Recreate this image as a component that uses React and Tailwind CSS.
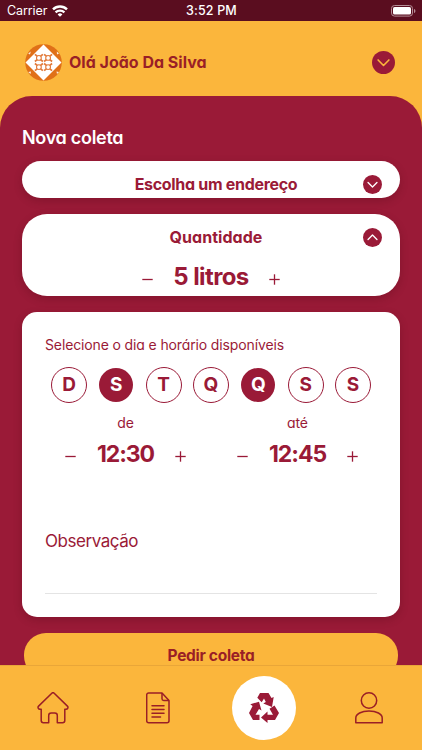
import React from 'react';
import clsx from 'clsx';

const days = [
  { label: 'D', selected: false },
  { label: 'S', selected: true },
  { label: 'T', selected: false },
  { label: 'Q', selected: false },
  { label: 'Q', selected: true },
  { label: 'S', selected: false },
  { label: 'S', selected: false },
];

function StatusBar() {
  return (
    <div className="h-[21px] shrink-0 bg-[#5a0d1f] text-white grid grid-cols-3 items-center pl-[7px] pr-[6px] pt-px [font-feature-settings:normal]">
      <div className="flex items-center gap-[5px] text-[12.5px] leading-none">
        <span className="tracking-[-0.1px]">Carrier</span>
        <svg width="16" height="12" viewBox="0 0 16 12" fill="none" stroke="white" strokeWidth="2.4">
          <path d="M1 4.4a10 10 0 0 1 14 0" />
          <path d="M3.6 7.4a6.3 6.3 0 0 1 8.8 0" />
          <path d="M8 11.8 5.6 9.4a3.4 3.4 0 0 1 4.8 0z" fill="white" stroke="none" />
        </svg>
      </div>
      <span className="text-center text-[12.5px] leading-none font-medium tracking-[0.15px]">3:52 PM</span>
      <svg className="justify-self-end" width="25" height="12" viewBox="0 0 25 12">
        <rect x="0.5" y="0.5" width="21" height="10.6" rx="3" fill="none" stroke="#b58d96" />
        <rect x="2" y="2" width="18" height="7.6" rx="1.6" fill="white" />
        <path d="M23 4v4c1-.3 1.4-1.1 1.4-2S24 4.3 23 4z" fill="#b58d96" />
      </svg>
    </div>
  );
}

// Quarter of the avatar's tile pattern
function Tile({ x, y }) {
  return (
    <g transform={`translate(${x} ${y})`} stroke="#e27a3a" strokeWidth="1.1" fill="none">
      <circle cx="4" cy="4" r="2.4" />
      <path d="M0 0.4 2.3 2.3M8 0.4 5.7 2.3M0 7.6 2.3 5.7M8 7.6 5.7 5.7" strokeWidth="1.7" />
    </g>
  );
}

function Avatar() {
  return (
    <svg width="37" height="37" viewBox="0 0 37 37">
      <circle cx="18.5" cy="18.5" r="18.3" fill="#e07018" />
      <path d="M18.5 0.5 36.5 18.5 18.5 36.5 0.5 18.5z" fill="white" />
      <path d="M3.2 9.5 5.8 7.5 5 10.5zM31.8 7.5 34 9.5 32 10.5zM3.2 28 6 27.5 5.5 30zM31.5 27.5 34 28 32 30z" fill="#fdeedd" />
      <Tile x={9.9} y={9.9} />
      <Tile x={19.1} y={9.9} />
      <Tile x={9.9} y={19.1} />
      <Tile x={19.1} y={19.1} />
    </svg>
  );
}

function ChevronBadge({ up, size, stroke }) {
  return (
    <svg className={up ? 'rotate-180' : ''} width={size} height={size} viewBox="0 0 20 20" fill="none">
      <circle cx="10" cy="10" r="10" fill="#9a1a37" />
      <path d="M5.3 7.8 10 12.6 14.7 7.8" stroke={stroke} strokeWidth="1.4" strokeLinecap="round" strokeLinejoin="round" />
    </svg>
  );
}

function Sign({ plus }) {
  return (
    <svg width="11" height="11" viewBox="0 0 11 11" stroke="#9a1a37" strokeWidth="1.3">
      <path d="M0.3 5.5H10.7" />
      {plus && <path d="M5.5 0.3V10.7" />}
    </svg>
  );
}

function TimePicker({ label, value }) {
  return (
    <div className="w-[121px] flex flex-col items-center">
      <span className="text-[14px] leading-[18px] tracking-[-0.1px]">{label}</span>
      <div className="w-full flex items-center justify-between mt-[9px] h-[27px]">
        <span className="pt-[3px]"><Sign /></span>
        <span className="text-[23px] leading-none font-bold tracking-[-1.05px]">{value}</span>
        <span className="pt-[3px]"><Sign plus /></span>
      </div>
    </div>
  );
}

function TabBar() {
  return (
    <nav className="h-[85px] shrink-0 bg-[#fbb63c] border-t border-[#e9a638] grid grid-cols-4 justify-items-center text-[#9a1f26]">
      <svg className="mt-[26px]" width="32" height="32" viewBox="0 0 32 32" fill="none" stroke="currentColor" strokeWidth="1.5" strokeLinejoin="round">
        <path d="M14.8 1.3a1.7 1.7 0 0 1 2.4 0L30.4 14.1c1.2 1.2.3 3.2-1.4 3.2H27.8V28.5a2.2 2.2 0 0 1-2.2 2.2H20.3V23.5a2.5 2.5 0 0 0-2.5-2.5H14.2a2.5 2.5 0 0 0-2.5 2.5V30.7H6.4a2.2 2.2 0 0 1-2.2-2.2V17.3H3C1.3 17.3.4 15.3 1.6 14.1z" />
      </svg>
      <svg className="mt-[26px]" width="24" height="32" viewBox="0 0 24 32" fill="none" stroke="currentColor" strokeWidth="1.5" strokeLinejoin="round">
        <path d="M2.7 1H16L23 8.5V28.8a2 2 0 0 1-2 2H2.7a2 2 0 0 1-2-2V3a2 2 0 0 1 2-2z" />
        <path d="M16 1V6.8a1.7 1.7 0 0 0 1.7 1.7H23" />
        <path d="M6 13.8H18M6 17.5H18M6 21.2H18M6 24.9H14.5" strokeLinecap="round" />
      </svg>
      <div className="mt-[10px] size-16 rounded-full bg-white flex items-center justify-center text-[#9a1a37]">
        <svg width="32" height="32" viewBox="0 0 32 32" fill="currentColor">
          <path d="M12 1H20.5L23.5 6 25.7 5 24 15 15.3 11.5 17.8 10 16 6.5 13.7 10.3 9.3 5.8z" />
          <path d="M2.3 12.2 11 9.7 13.5 18.5 11 17 7.5 22.8H11.5V28H5L1 21 4.6 14z" />
          <path d="M13 25.5 19.5 19.5V22.8H25L21.5 16.8 26.5 13.5 31 21 27 28H19.5V31z" />
        </svg>
      </div>
      <svg className="mt-[26px]" width="28" height="32" viewBox="0 0 28 32" fill="none" stroke="currentColor" strokeWidth="1.5">
        <circle cx="14" cy="8.5" r="7.7" />
        <path d="M.8 30.7V26C.8 22 6.5 19 14 19S27.2 22 27.2 26V30.7z" strokeLinejoin="round" />
      </svg>
    </nav>
  );
}

export default function App() {
  return (
    <div className="w-[422px] h-[750px] overflow-hidden flex flex-col bg-[#fbb63c] text-[#9a1a37] font-['Inter','Liberation_Sans',sans-serif] [font-feature-settings:'cv11']">
      <StatusBar />

      <header className="h-[75px] shrink-0 flex items-center pl-[24.5px] pr-[27px] pb-[7px] pt-[14px]">
        <Avatar />
        <h1 className="ml-[7.5px] flex-1 text-[16px] leading-none font-bold text-[#9a1f26]">Olá João Da Silva</h1>
        <ChevronBadge size={23} stroke="#fbb63c" />
      </header>

      <main className="flex-1 min-h-0 overflow-hidden rounded-t-[32px] bg-[#9a1a37] px-[22px] pt-[31px]">
        <h2 className="text-white text-[18px] leading-[22px] font-semibold tracking-[-0.3px]">Nova coleta</h2>

        <section className="mt-[12px] h-[37px] rounded-full bg-white shadow-[0_3px_9px_rgba(60,0,15,0.22)] grid grid-cols-[1fr_auto_1fr] items-center pl-[28px] pr-[18px] pt-[9px]">
          <span />
          <span className="text-[16px] leading-none font-bold tracking-[-0.3px]">Escolha um endereço</span>
          <span className="justify-self-end"><ChevronBadge size={19} stroke="white" /></span>
        </section>

        <section className="mt-[16px] h-[82px] rounded-[25px] bg-white shadow-[0_3px_9px_rgba(60,0,15,0.22)] px-[18px] pt-[13px]">
          <div className="grid grid-cols-[1fr_auto_1fr] items-center h-5 pl-[10px]">
            <span />
            <span className="text-[16px] leading-none font-bold tracking-[0.05px]">Quantidade</span>
            <span className="justify-self-end"><ChevronBadge up size={19} stroke="white" /></span>
          </div>
          <div className="flex items-center justify-center gap-[20px] mt-[15px]">
            <span className="pt-[4px]"><Sign /></span>
            <span className="text-[24px] leading-[30px] font-bold tracking-[-0.6px]">5 litros</span>
            <span className="pt-[4px]"><Sign plus /></span>
          </div>
        </section>

        <section className="mt-[16px] h-[305px] rounded-[15px] bg-white shadow-[0_3px_9px_rgba(60,0,15,0.22)] px-[23px] pt-[24px]">
          <p className="text-[14px] leading-[18px] tracking-[-0.13px]">Selecione o dia e horário disponíveis</p>
          <div className="flex justify-between items-center mt-[13px] mx-[6px] h-9">
            {days.map((day, i) => (
              <div key={i} className="size-9 flex items-center justify-center">
                <div
                  className={clsx(
                    'rounded-full flex items-center justify-center text-[19px] leading-none font-bold pb-px',
                    day.selected ? 'size-[34px] bg-[#9a1a37] text-white' : 'size-9 border border-[#9a1a37]',
                  )}
                >
                  {day.label}
                </div>
              </div>
            ))}
          </div>
          <div className="flex gap-[51px] mt-[11px] ml-[20px]">
            <TimePicker label="de" value="12:30" />
            <TimePicker label="até" value="12:45" />
          </div>
          <div className="mt-[59px] h-[67px] border-b border-[#e4e4e4] pt-[2px]">
            <span className="text-[17px] leading-[24px] [font-feature-settings:normal] tracking-[-0.45px]">Observação</span>
          </div>
        </section>

        <button className="block mt-[16px] mx-[2px] w-[374px] h-[45px] rounded-[22px] bg-[#fbb63c] text-[#9a1f26] text-[15.5px] leading-none font-bold tracking-[-0.3px]">
          Pedir coleta
        </button>
      </main>

      <TabBar />
    </div>
  );
}
